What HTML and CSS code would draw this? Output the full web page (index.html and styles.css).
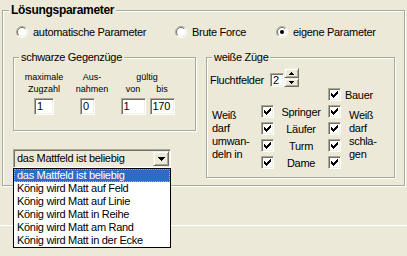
FILE: index.html
```html
<!DOCTYPE html>
<html lang="de">
<head>
    <meta charset="UTF-8">
    <title>Lösungsparameter</title>
    <link rel="stylesheet" href="styles.css">
</head>
<body>
    <svg class="defs" width="0" height="0">
        <symbol id="check" viewBox="0 0 7 7">
            <path d="M0 2h1v3H0z M1 3h1v3H1z M2 4h1v3H2z M3 3h1v3H3z M4 2h1v3H4z M5 1h1v3H5z M6 0h1v3H6z" fill="#000"/>
        </symbol>
        <symbol id="radio" viewBox="0 0 12 12">
            <circle cx="6" cy="6" r="5" fill="#fff"/>
            <path d="M2.1 9.9A5.5 5.5 0 0 1 9.9 2.1" fill="none" stroke="#aca899"/>
            <path d="M9.9 2.1A5.5 5.5 0 0 1 2.1 9.9" fill="none" stroke="#fff"/>
            <path d="M2.8 9.2A4.5 4.5 0 0 1 9.2 2.8" fill="none" stroke="#716f64"/>
            <path d="M9.2 2.8A4.5 4.5 0 0 1 2.8 9.2" fill="none" stroke="#f1efe2"/>
        </symbol>
    </svg>

    <div class="group outer">
        <div class="caption">Lösungsparameter</div>

        <div class="radios">
            <div class="radio r1">
                <svg width="12" height="12"><use href="#radio"/></svg>
                automatische Parameter
            </div>
            <div class="radio r2">
                <svg width="12" height="12"><use href="#radio"/></svg>
                Brute Force
            </div>
            <div class="radio">
                <svg width="12" height="12"><use href="#radio"/><circle cx="6" cy="6" r="2" fill="#000"/></svg>
                eigene Parameter
            </div>
        </div>

        <div class="inner">
            <div class="left-col">
                <div class="group black-moves">
                    <div class="caption">schwarze Gegenzüge</div>
                    <div class="bgrid">
                        <div class="small">maximale</div>
                        <div class="small shift">Aus-</div>
                        <div class="small span2">gültig</div>
                        <div class="small">Zugzahl</div>
                        <div class="small shift">nahmen</div>
                        <div class="small">von</div>
                        <div class="small">bis</div>
                        <div class="field w20">1</div>
                        <div class="field w15 aus">0</div>
                        <div class="field w25">1</div>
                        <div class="field w25">170</div>
                    </div>
                </div>

                <div class="combo">
                    <div class="combo-text">das Mattfeld ist beliebig</div>
                    <div class="btn combo-btn">
                        <svg width="7" height="4"><path d="M0 0h7v1H0z M1 1h5v1H1z M2 2h3v1H2z M3 3h1v1H3z" fill="#000"/></svg>
                    </div>
                    <ul class="combo-list">
                        <li class="sel">das Mattfeld ist beliebig</li>
                        <li>König wird Matt auf Feld</li>
                        <li>König wird Matt auf Linie</li>
                        <li>König wird Matt in Reihe</li>
                        <li>König wird Matt am Rand</li>
                        <li>König wird Matt in der Ecke</li>
                    </ul>
                </div>
            </div>

            <div class="group white-moves">
                <div class="caption">weiße Züge</div>
                <div class="flucht">
                    <span class="flucht-label">Fluchtfelder</span>
                    <div class="field spinfield">2</div>
                    <div class="spin">
                        <div class="btn up">
                            <svg width="5" height="3"><path d="M2 0h1v1H2z M1 1h3v1H1z M0 2h5v1H0z" fill="#000"/></svg>
                        </div>
                        <div class="btn down">
                            <svg width="5" height="3"><path d="M0 0h5v1H0z M1 1h3v1H1z M2 2h1v1H2z" fill="#000"/></svg>
                        </div>
                    </div>
                </div>

                <div class="wgrid">
                    <div class="promote">Weiß<br>darf<br>umwan-<br>deln in</div>
                    <div class="capture">Weiß<br>darf<br>schla-<br>gen</div>

                    <div class="cb cb2"><svg width="7" height="7"><use href="#check"/></svg></div>
                    <div class="bauer">Bauer</div>

                    <div class="cb cb1"><svg width="7" height="7"><use href="#check"/></svg></div>
                    <div class="piece">Springer</div>
                    <div class="cb cb2"><svg width="7" height="7"><use href="#check"/></svg></div>

                    <div class="cb cb1"><svg width="7" height="7"><use href="#check"/></svg></div>
                    <div class="piece">Läufer</div>
                    <div class="cb cb2"><svg width="7" height="7"><use href="#check"/></svg></div>

                    <div class="cb cb1"><svg width="7" height="7"><use href="#check"/></svg></div>
                    <div class="piece">Turm</div>
                    <div class="cb cb2"><svg width="7" height="7"><use href="#check"/></svg></div>

                    <div class="cb cb1"><svg width="7" height="7"><use href="#check"/></svg></div>
                    <div class="piece">Dame</div>
                    <div class="cb cb2"><svg width="7" height="7"><use href="#check"/></svg></div>
                </div>
            </div>
        </div>
    </div>

    <div class="sep"></div>
</body>
</html>
```

FILE: styles.css
```css
body {
    margin: 0;
    width: 407px;
    height: 256px;
    overflow: hidden;
    background-color: #ece9d8;
    font-family: "Liberation Sans", Arial, sans-serif;
    font-size: 11px;
    letter-spacing: -0.3px;
    color: #000;
}

.defs {
    position: absolute;
}

/* etched group box */
.group {
    box-sizing: border-box;
    border: 1px solid #aca899;
    box-shadow: inset 1px 1px 0 #fff, 1px 1px 0 #fff;
}

.caption {
    display: table;
    margin: -8px 0 0 5px;
    padding: 0 2px;
    line-height: 14px;
    background-color: #ece9d8;
}

.outer {
    margin: 10px 0 0 2px;
    width: 403px;
    height: 176px;
}

.outer > .caption {
    margin-left: 6px;
    font-size: 12px;
    font-weight: bold;
}

.radios {
    display: flex;
    align-items: center;
    height: 14px;
    margin: 8px 0 0 13px;
}

.radio {
    display: flex;
    align-items: center;
    gap: 5px;
}

.radio svg {
    flex: none;
}

.r1 {
    width: 159px;
}

.r2 {
    width: 101px;
}

.inner {
    display: flex;
    align-items: flex-start;
    margin: 18px 0 0 10px;
}

.left-col {
    width: 183px;
}

.black-moves {
    height: 74px;
}

.white-moves {
    width: 189px;
    height: 121px;
    margin-left: 10px;
}

/* sunken and raised 3d edges */
.field {
    box-sizing: border-box;
    height: 17px;
    padding: 0 2px;
    line-height: 15px;
    background-color: #fff;
    border: 1px solid;
    border-color: #aca899 #fff #fff #aca899;
    box-shadow: inset 1px 1px 0 #716f64, inset -1px -1px 0 #f1efe2;
}

.btn {
    box-sizing: border-box;
    display: flex;
    align-items: center;
    justify-content: center;
    background-color: #ece9d8;
    border: 1px solid;
    border-color: #f1efe2 #716f64 #716f64 #f1efe2;
    box-shadow: inset 1px 1px 0 #fff, inset -1px -1px 0 #aca899;
}

/* schwarze Gegenzüge */
.bgrid {
    display: grid;
    grid-template-columns: 40px 54px 30px 28px;
    grid-template-rows: 12px 12px auto;
    justify-items: center;
    margin: 7px 0 0 10px;
}

.small {
    font-size: 9px;
    line-height: 12px;
    letter-spacing: 0;
}

.shift {
    padding-left: 2px;
}

.span2 {
    grid-column: 3 / span 2;
}

.bgrid .field {
    margin-top: 3px;
}

.w20 {
    width: 20px;
}

.w15 {
    width: 15px;
}

.w25 {
    width: 25px;
}

.aus {
    justify-self: start;
    margin-left: 16px;
}

/* combo box with open list */
.combo {
    position: relative;
    box-sizing: border-box;
    display: flex;
    width: 158px;
    height: 19px;
    margin-top: 18px;
    background-color: #ece9d8;
    border: 1px solid;
    border-color: #aca899 #fff #fff #aca899;
    box-shadow: inset 1px 1px 0 #716f64, inset -1px -1px 0 #f1efe2;
}

.combo-text {
    flex: 1;
    padding-left: 3px;
    line-height: 17px;
}

.combo-btn {
    width: 16px;
    height: 15px;
    margin: 1px;
}

.combo-list {
    position: absolute;
    top: 18px;
    left: -1px;
    z-index: 1;
    box-sizing: border-box;
    width: 158px;
    margin: 0;
    padding: 0;
    list-style: none;
    background-color: #fff;
    border: 1px solid #000;
}

.combo-list li {
    height: 13px;
    padding-left: 3px;
    line-height: 13px;
    white-space: nowrap;
}

.combo-list .sel {
    background-color: #316ac5;
    color: #fff;
    outline: 1px dotted #e8a53a;
    outline-offset: -1px;
}

/* weiße Züge */
.flucht {
    display: flex;
    align-items: flex-end;
    height: 19px;
    margin: 4px 0 0 3px;
}

.flucht-label {
    width: 60px;
    line-height: 14px;
}

.spinfield {
    width: 14px;
    height: 14px;
    line-height: 12px;
}

.spin {
    display: flex;
    flex-direction: column;
    width: 15px;
    height: 19px;
}

.spin .up {
    height: 10px;
}

.spin .down {
    height: 9px;
}

.wgrid {
    display: grid;
    grid-template-columns: 54px 13px 54px 13px 1fr;
    grid-auto-rows: 17px;
    align-items: center;
    margin-top: -1px;
}

.promote,
.capture {
    grid-row: 2 / span 4;
    align-self: start;
    padding-top: 6px;
    line-height: 13px;
}

.promote {
    grid-column: 1;
    padding-left: 5px;
}

.capture {
    grid-column: 5;
    padding-left: 8px;
}

.cb {
    box-sizing: border-box;
    display: flex;
    align-items: center;
    justify-content: center;
    width: 13px;
    height: 13px;
    background-color: #fff;
    border: 1px solid;
    border-color: #aca899 #fff #fff #aca899;
    box-shadow: inset 1px 1px 0 #716f64, inset -1px -1px 0 #f1efe2;
}

.cb1 {
    grid-column: 2;
}

.cb2 {
    grid-column: 4;
}

.piece {
    grid-column: 3;
    text-align: center;
}

.bauer {
    grid-column: 5;
    padding-left: 4px;
}

.sep {
    margin-top: 39px;
    border-top: 1px solid #fff;
}
```
